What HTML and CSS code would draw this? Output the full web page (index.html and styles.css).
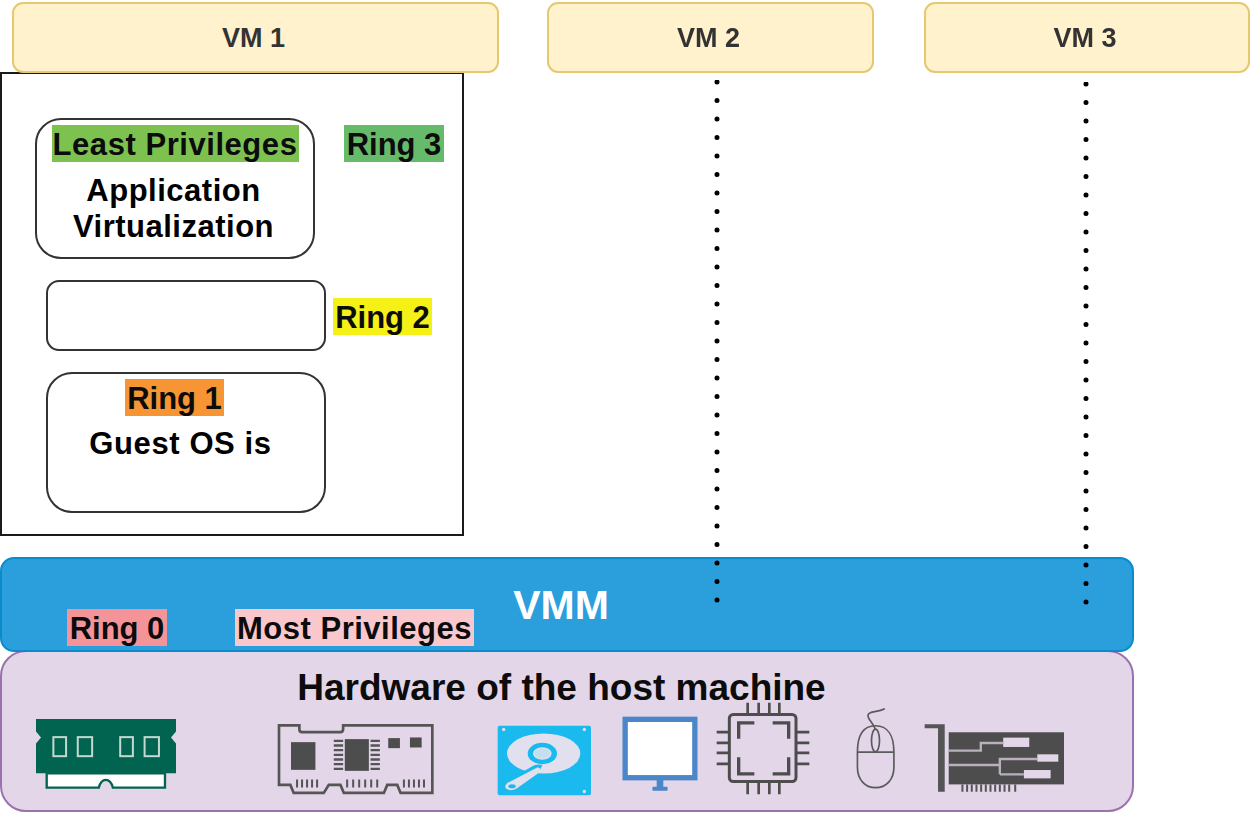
FILE: index.html
```html
<!DOCTYPE html>
<html lang="en">
<head>
<meta charset="utf-8">
<title>Virtualization rings</title>
<link rel="stylesheet" href="styles.css">
</head>
<body>
<main class="canvas">
  <section class="frame"></section>
  <div class="vm vm-1">VM 1</div>
  <div class="vm vm-2">VM 2</div>
  <div class="vm vm-3">VM 3</div>

  <div class="ring-box box-app">
    <span class="tag tag-least">Least Privileges</span>
    <p class="box-text app-text">Application<br>Virtualization</p>
  </div>
  <span class="tag tag-r3 node">Ring 3</span>

  <div class="ring-box box-empty"></div>
  <span class="tag tag-r2 node">Ring 2</span>

  <div class="ring-box box-guest">
    <span class="tag tag-r1">Ring 1</span>
    <p class="box-text guest-text">Guest OS is</p>
  </div>

  <section class="hardware">
    <h2 class="hw-title">Hardware of the host machine</h2>
    <div class="icons">
      <svg class="icon ic-ram" viewBox="105 85 425 215" aria-hidden="true">
        <path d="M108 88H527V125L512 143L527 161V250H108V161L123 143L108 125Z" fill="#006450"/>
        <path d="M140 250H494V293H338Q332 270 317 270Q302 270 296 293H140Z" fill="#fff" stroke="#006450" stroke-width="7"/>
        <g fill="none" stroke="#c4d8cf" stroke-width="6">
          <rect x="160" y="142" width="38" height="57"/>
          <rect x="233" y="142" width="43" height="57"/>
          <rect x="360" y="142" width="38" height="57"/>
          <rect x="433" y="142" width="43" height="57"/>
        </g>
      </svg>

      <svg class="icon ic-nic" viewBox="830 105 470 215" aria-hidden="true">
        <path d="M836 112H897V124Q897 132 905 132H1020Q1028 132 1028 122V112H1295V314H1200L1190 290H1160L1150 314H1030L1020 290H985L970 314H880L870 290H836Z" fill="none" stroke="#555" stroke-width="8"/>
        <g fill="#4d4d4d">
          <rect x="872" y="162" width="73" height="83"/>
          <rect x="1033" y="153" width="72" height="95"/>
          <rect x="1163" y="150" width="35" height="30"/>
          <rect x="1228" y="148" width="35" height="30"/>
        </g>
        <path d="M1000 158H1028M1000 172H1028M1000 186H1028M1000 200H1028M1000 214H1028M1000 228H1028M1000 242H1028M1110 158H1138M1110 172H1138M1110 186H1138M1110 200H1138M1110 214H1138M1110 228H1138M1110 242H1138" stroke="#555" stroke-width="7"/>
        <path d="M890 274V298M905 274V298M920 274V298M935 274V298M950 274V298M1040 274V298M1058 274V298M1076 274V298M1094 274V298M1112 274V298M1130 274V298M1210 274V298M1225 274V298M1240 274V298M1255 274V298M1270 274V298" stroke="#555" stroke-width="6"/>
      </svg>

      <svg class="icon ic-hdd" viewBox="50 105 285 212" aria-hidden="true">
        <rect x="52" y="107" width="280" height="208" rx="6" fill="#1ab9ee"/>
        <ellipse cx="190" cy="190" rx="110" ry="60" fill="#e2e0ee"/>
        <ellipse cx="186" cy="190" rx="44" ry="32" fill="#1ab9ee"/>
        <ellipse cx="186" cy="190" rx="26" ry="17" fill="#c4e0f0" stroke="#e2e0ee" stroke-width="4"/>
        <path d="M186 226Q178 220 160 226L80 272Q62 286 72 300Q90 312 112 300L172 252Z" fill="#1ab9ee"/>
        <path d="M172 231L82 278Q70 288 78 296Q92 304 108 296L178 246Q186 234 172 231Z" fill="#e2e0ee"/>
        <ellipse cx="95" cy="288" rx="11" ry="6" fill="#1ab9ee"/>
        <g fill="#e2e0ee">
          <circle cx="70" cy="118" r="5"/><circle cx="312" cy="118" r="5"/><circle cx="312" cy="304" r="5"/>
        </g>
      </svg>

      <svg class="icon ic-monitor" viewBox="426 78 228 226" aria-hidden="true">
        <rect x="435" y="88" width="210" height="176" fill="#fff" stroke="#4a86c8" stroke-width="16"/>
        <rect x="530" y="270" width="20" height="24" fill="#4a86c8"/>
        <rect x="517" y="291" width="46" height="12" rx="3" fill="#4a86c8"/>
      </svg>

      <svg class="icon ic-cpu" viewBox="710 40 282 278" aria-hidden="true">
        <rect x="750" y="77" width="200" height="201" rx="12" fill="none" stroke="#4d4d4d" stroke-width="9"/>
        <path d="M778 150V102H825M880 102H928V150M778 205V255H825M880 255H928V205" fill="none" stroke="#4d4d4d" stroke-width="10"/>
        <path d="M805 42V75M838 42V75M870 42V75M900 42V75M805 280V316M838 280V316M870 280V316M900 280V316M712 130H748M712 162H748M712 192H748M712 225H748M952 130H990M952 162H990M952 192H990M952 225H990" stroke="#4d4d4d" stroke-width="8"/>
      </svg>

      <svg class="icon ic-mouse" viewBox="165 55 122 245" aria-hidden="true">
        <path d="M226 111C190 111 172 140 172 190V235C172 272 195 296 226 296C258 296 281 272 281 235V190C281 140 262 111 226 111Z" fill="none" stroke="#5a5a5a" stroke-width="5"/>
        <path d="M172 190H281" stroke="#5a5a5a" stroke-width="5"/>
        <ellipse cx="226" cy="155" rx="12" ry="34" fill="none" stroke="#5a5a5a" stroke-width="5"/>
        <path d="M226 122C218 100 200 90 204 78C208 66 230 72 254 60" fill="none" stroke="#5a5a5a" stroke-width="5"/>
      </svg>

      <svg class="icon ic-card" viewBox="373 105 422 208" aria-hidden="true">
        <path d="M375 108H435V310H415V120H375Z" fill="#555"/>
        <rect x="447" y="132" width="345" height="156" fill="#4d4d4d"/>
        <g fill="#e2d6e8">
          <rect x="610" y="148" width="78" height="28"/>
          <rect x="712" y="198" width="63" height="22"/>
          <rect x="672" y="245" width="80" height="25"/>
        </g>
        <path d="M447 187H543V164H610M447 230H600M600 258V212H712M600 258H672" fill="none" stroke="#b9afbd" stroke-width="7"/>
        <path d="M488 288V310M502 288V310M516 288V310M530 288V310M544 288V310M558 288V310M572 288V310M586 288V310M600 288V310M614 288V310M628 288V310M646 288V310" stroke="#555" stroke-width="6"/>
      </svg>
    </div>
  </section>

  <section class="vmm">
    <h2 class="vmm-title">VMM</h2>
    <span class="tag tag-r0 node">Ring 0</span>
    <span class="tag tag-most node">Most Privileges</span>
  </section>

  <svg class="dots dots-2" viewBox="0 0 6 526" aria-hidden="true"><line x1="3" y1="2" x2="3" y2="524" /></svg>
  <svg class="dots dots-3" viewBox="0 0 6 526" aria-hidden="true"><line x1="3" y1="2" x2="3" y2="524" /></svg>
</main>
</body>
</html>
```

FILE: styles.css
```css
* {
  box-sizing: border-box;
}

html,
body {
  margin: 0;
  background: #fff;
}

.canvas {
  position: relative;
  width: 1250px;
  height: 813px;
  overflow: hidden;
  font-family: "Liberation Sans", Arial, sans-serif;
  font-weight: 700;
  color: #0c0c0c;
  filter: blur(0.45px);
}

.frame {
  position: absolute;
  left: 0;
  top: 72px;
  width: 464px;
  height: 464px;
  border: 2px solid #1a1a1a;
}

.vm {
  position: absolute;
  top: 2px;
  height: 71px;
  display: flex;
  align-items: center;
  justify-content: center;
  padding: 2px 4px 0 0;
  background: #fff2cc;
  border: 2px solid #e5c870;
  border-radius: 11px;
  font-size: 27px;
  color: #333;
}

.vm-1 { left: 12px; width: 487px; }
.vm-2 { left: 547px; width: 327px; }
.vm-3 { left: 924px; width: 326px; }

.ring-box {
  position: absolute;
  display: flex;
  flex-direction: column;
  align-items: center;
  background: #fff;
  border: 2px solid #333;
}

.box-app {
  left: 35px;
  top: 118px;
  width: 280px;
  height: 141px;
  border-radius: 26px;
  padding-top: 5px;
}

.box-empty {
  left: 46px;
  top: 280px;
  width: 280px;
  height: 71px;
  border-radius: 13px;
}

.box-guest {
  left: 46px;
  top: 372px;
  width: 280px;
  height: 141px;
  border-radius: 26px;
  padding-top: 5px;
}

.box-text {
  margin: 8px 0 0;
  font-size: 31px;
  line-height: 36px;
  text-align: center;
  color: #000;
}

.app-text {
  margin-top: 11px;
  padding-right: 3px;
  letter-spacing: 0.5px;
}

.guest-text {
  margin-top: 10px;
  padding-right: 11px;
  letter-spacing: 0.6px;
}

.tag {
  display: flex;
  align-items: center;
  justify-content: center;
  height: 37px;
  padding-top: 2px;
  font-size: 31px;
  line-height: 37px;
  white-space: nowrap;
}

.node {
  position: absolute;
}

.tag-least {
  width: 247px;
  background: #7dc24f;
  letter-spacing: 0.55px;
}

.tag-r3 {
  left: 344px;
  top: 125px;
  width: 100px;
  background: #66bb6a;
}

.tag-r2 {
  left: 333px;
  top: 298px;
  width: 99px;
  background: #f5f016;
}

.tag-r1 {
  width: 99px;
  margin-right: 23px;
  background: #f79433;
}

.vmm {
  position: absolute;
  left: 0;
  top: 557px;
  width: 1134px;
  height: 95px;
  display: flex;
  align-items: flex-start;
  justify-content: center;
  background: #2a9fdc;
  border: 2px solid #0a8ccc;
  border-radius: 14px;
}

.vmm-title {
  margin: 22px 12px 0 0;
  font-size: 41px;
  line-height: 48px;
  color: #fff;
}

.tag-r0 {
  left: 65px;
  top: 50px;
  width: 100px;
  background: #f49499;
}

.tag-most {
  left: 233px;
  top: 50px;
  width: 239px;
  background: #fac8cc;
  letter-spacing: 0.5px;
}

.hardware {
  position: absolute;
  left: 0;
  top: 650px;
  width: 1134px;
  height: 162px;
  background: #e2d6e8;
  border: 2px solid #9b72ae;
  border-radius: 26px;
}

.hw-title {
  margin: 14px 0 0;
  padding-right: 11px;
  font-size: 37px;
  line-height: 44px;
  text-align: center;
  color: #0c0c0c;
}

.icons {
  display: flex;
  align-items: flex-start;
  margin-top: -10px;
}

.icon {
  display: block;
  flex: none;
}

.ic-ram { width: 142px; height: 72px; margin: 18px 0 0 33px; }
.ic-nic { width: 157px; height: 72px; margin: 23px 0 0 100px; }
.ic-hdd { width: 95px; height: 71px; margin: 25px 0 0 63px; }
.ic-monitor { width: 76px; height: 75px; margin: 16px 0 0 30px; }
.ic-cpu { width: 94px; height: 93px; margin: 2px 0 0 18px; }
.ic-mouse { width: 41px; height: 82px; margin: 7px 0 0 45px; }
.ic-card { width: 141px; height: 70px; margin: 23px 0 0 28px; }

.dots {
  position: absolute;
  width: 6px;
  height: 526px;
  stroke: #000;
  stroke-width: 5;
  stroke-linecap: round;
  stroke-dasharray: 0 18.5;
}

.dots-2 { left: 714px; top: 80px; }
.dots-3 { left: 1083px; top: 82px; }
```
